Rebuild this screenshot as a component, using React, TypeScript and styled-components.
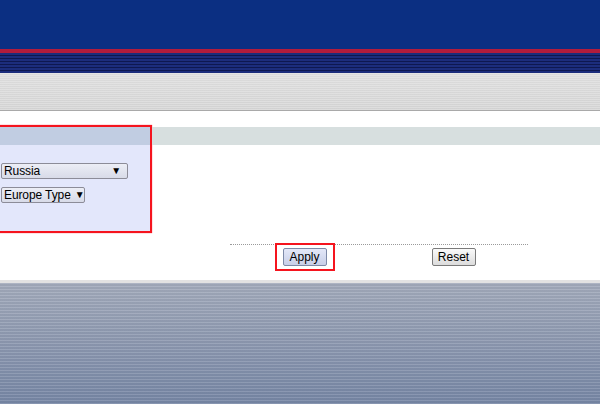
import React from "react";
import styled, { createGlobalStyle } from "styled-components";

const Global = createGlobalStyle`
  html, body { margin: 0; padding: 0; background: #ffffff; }
  body { font-family: "Liberation Sans", Arial, sans-serif; overflow: hidden; }
`;

const Page = styled.div`
  width: 600px;
  min-height: 404px;
  display: flex;
  flex-direction: column;
  overflow: hidden;
`;

const Banner = styled.header`
  height: 49px;
  background: #0b2f82;
`;

const RedRule = styled.div`
  height: 4px;
  background: #b21c3c;
`;

const NavyStripes = styled.div`
  height: 20px;
  background: repeating-linear-gradient(
    to bottom,
    #1c2d7c 0px,
    #1c2d7c 2px,
    #0e1850 2px,
    #0e1850 3px
  );
`;

const MenuBar = styled.nav`
  height: 37px;
  background:
    repeating-linear-gradient(
      to bottom,
      rgba(255, 255, 255, 0.25) 0px,
      rgba(255, 255, 255, 0.25) 1px,
      rgba(0, 0, 0, 0) 1px,
      rgba(0, 0, 0, 0) 2px
    ),
    linear-gradient(#dcdcdc, #d2d2d2);
  border-bottom: 1px solid #a9a9a9;
  box-shadow: 0 1px 0 #d8d8d8;
`;

const Content = styled.main`
  padding-top: 14px;
  background: #ffffff;
  display: flex;
  flex-direction: column;
`;

const SettingsRow = styled.section`
  display: flex;
  align-items: flex-start;
`;

const Panel = styled.div`
  width: 150px;
  margin-left: -2px;
  border: 2px solid #f5141e;
  box-shadow: 0 0 1px #ff5060;
  background: #e3e7fb;
  padding-bottom: 28px;
`;

const PanelHead = styled.div`
  height: 18px;
  background: #c1cde2;
`;

const Fields = styled.div`
  padding: 18px 0 0 1px;
  display: flex;
  flex-direction: column;
  gap: 8px;
`;

const Select = styled.div<{ $w: number }>`
  width: ${(p) => p.$w}px;
  height: 16px;
  box-sizing: border-box;
  border: 1px solid #8c8c98;
  border-radius: 2px;
  background: linear-gradient(#eceef6, #d8dbe8);
  display: flex;
  align-items: center;
  justify-content: space-between;
  gap: 4px;
  padding: 0 6px 0 2px;
  font-size: 12px;
  letter-spacing: -0.1px;
  color: #000;
  white-space: nowrap;
`;

const Arrow = styled.span`
  font-size: 10px;
  line-height: 1;
`;

const BandTrack = styled.div`
  flex: 1;
  height: 18px;
  margin-top: 2px;
  background: #d7dfdf;
`;

const ActionBar = styled.div`
  margin: 11px 0 0 230px;
  width: 298px;
  border-top: 1px dotted #9a9a9a;
  display: grid;
  grid-template-columns: 1fr 1fr;
  height: 35px;
`;

const Cell = styled.div`
  display: flex;
  justify-content: center;
  align-items: flex-start;
`;

const Highlight = styled.div`
  margin-top: -2px;
  border: 2px solid #f5141e;
  padding: 3px 6px;
  display: flex;
`;

const Button = styled.button<{ $primary?: boolean }>`
  margin-top: ${(p) => (p.$primary ? 0 : 3)}px;
  height: 18px;
  width: 44px;
  padding: 0;
  font-family: "Liberation Sans", Arial, sans-serif;
  font-size: 12px;
  color: #000;
  border-radius: 2px;
  border: 1px solid ${(p) => (p.$primary ? "#7e8aa8" : "#7a7a7a")};
  background: ${(p) =>
    p.$primary
      ? "linear-gradient(#e4e8f8, #c8cfe8)"
      : "linear-gradient(#fafafa, #dcdcdc)"};
  cursor: pointer;
`;

const Footer = styled.footer`
  flex: 1;
  min-height: 124px;
  border-top: 3px solid #e2e2e2;
  background:
    repeating-linear-gradient(
      to bottom,
      rgba(255, 255, 255, 0.12) 0px,
      rgba(255, 255, 255, 0.12) 1px,
      rgba(0, 0, 0, 0.03) 1px,
      rgba(0, 0, 0, 0.03) 3px
    ),
    linear-gradient(#a2aabb, #7585a4);
`;

export default function App() {
  return (
    <>
      <Global />
      <Page>
        <Banner />
        <RedRule />
        <NavyStripes />
        <MenuBar />
        <Content>
          <SettingsRow>
            <Panel>
              <PanelHead />
              <Fields>
                <Select $w={127}>
                  <span>Russia</span>
                  <Arrow>▼</Arrow>
                </Select>
                <Select $w={84}>
                  <span>Europe Type</span>
                  <Arrow>▼</Arrow>
                </Select>
              </Fields>
            </Panel>
            <BandTrack />
          </SettingsRow>
          <ActionBar>
            <Cell>
              <Highlight>
                <Button $primary>Apply</Button>
              </Highlight>
            </Cell>
            <Cell>
              <Button>Reset</Button>
            </Cell>
          </ActionBar>
        </Content>
        <Footer />
      </Page>
    </>
  );
}
